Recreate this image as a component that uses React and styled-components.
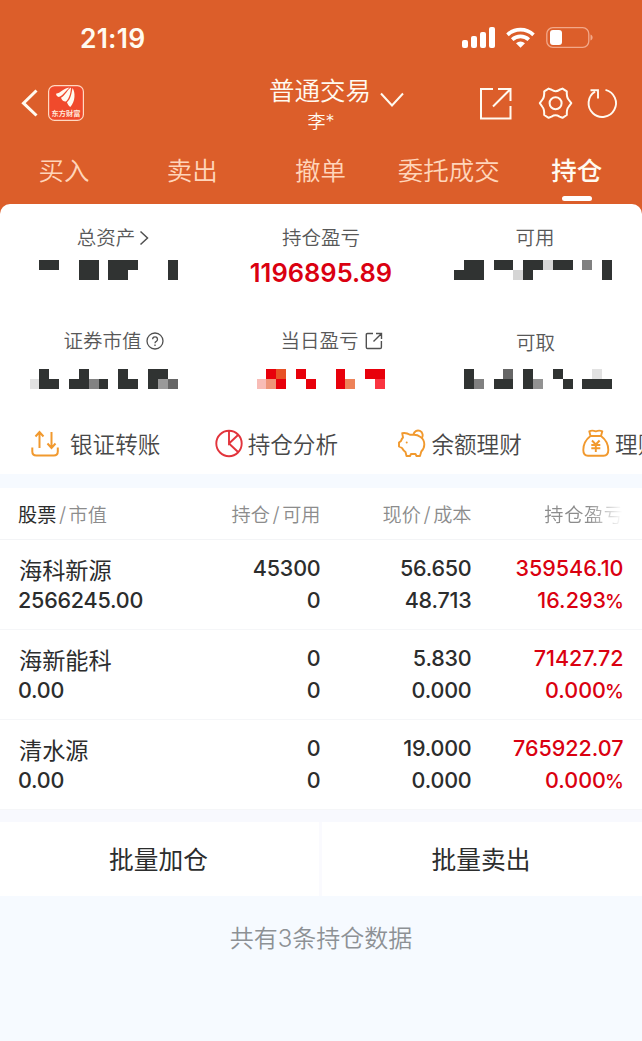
import React from 'react'
import styled, { createGlobalStyle } from 'styled-components'

const GlobalStyle = createGlobalStyle`
  * {
    box-sizing: border-box;
  }

  body {
    margin: 0;
    background: #f6faff;
    font-family: Inter, 'Noto Sans CJK SC', sans-serif;
    color: #2c2d2d;
    overflow: hidden;
  }
`

const Page = styled('div')`
  width: 642px;
  height: 1041px;
  overflow: hidden;
  white-space: nowrap;
`

const Header = styled('header')`
  height: 214px;
  background: #dc5e2a;
  color: #fffaf0;
`

const StatusBar = styled('div')`
  display: flex;
  align-items: center;
  justify-content: space-between;
  height: 76px;
  padding: 0 49px 0 80px;
`

const Clock = styled('span')`
  font-size: 26.5px;
  font-weight: 600;
  line-height: 30px;
  letter-spacing: 0.2px;
`

const NavBar = styled('div')`
  display: grid;
  grid-template-columns: 214px 1fr 214px;
  height: 66px;
`

const NavSide = styled('div')`
  display: flex;
  align-items: center;
  padding-left: ${({ $right }) => ($right ? 50 : 20)}px;
  height: 54px;
`

const NavCenter = styled('div')`
  display: flex;
  flex-direction: column;
  align-items: center;
`

const Title = styled('div')`
  display: flex;
  align-items: center;
  gap: 9px;
  height: 30px;
  padding-left: 31px;
  font-size: 25.5px;
  line-height: 24px;
  font-weight: 350;
`

const Chevron = styled('svg')`
  margin-top: 17px;
`

const Account = styled('div')`
  font-size: 18px;
  line-height: 32px;
  font-weight: 350;
`

const Tabs = styled('nav')`
  display: flex;
  height: 62px;
  padding: 12px 1px 0 0;
`

const Tab = styled('div')`
  display: flex;
  flex-direction: column;
  align-items: center;
  width: 128.2px;
  font-size: 25.5px;
  line-height: 34px;
  font-weight: ${({ $active }) => ($active ? 500 : 350)};
  color: ${({ $active }) => ($active ? '#fffaf0' : '#ffd5ba')};

  &::after {
    content: '';
    width: 30px;
    height: 5px;
    margin-top: 8px;
    border-radius: 3px;
    background: ${({ $active }) => ($active ? '#fff' : 'transparent')};
  }
`

const Summary = styled('section')`
  height: 270px;
  margin-top: -10px;
  border-radius: 10px 10px 0 0;
  background: #fff;
`

const Stats = styled('div')`
  display: grid;
  grid-template-columns: repeat(3, 214px);
  grid-template-rows: 109px 97px;
  padding-top: 19px;
`

const Stat = styled('div')`
  display: flex;
  flex-direction: column;
`

const StatLabel = styled('div')`
  display: flex;
  align-items: center;
  justify-content: center;
  gap: ${({ $gap }) => $gap || 4}px;
  height: 30px;
  margin-top: ${({ $drop }) => $drop || 0}px;
  padding-left: ${({ $indent }) => $indent || 0}px;
  font-size: 19.5px;
  font-weight: 350;
  color: #585858;
`

const LabelText = styled('span')`
  padding-bottom: 3px;
`

const Profit = styled('div')`
  text-align: center;
  font-size: 25.5px;
  line-height: 40px;
  font-weight: 600;
  color: #da0010;
`

const Mosaic = styled('svg')`
  display: block;
  margin-top: ${({ $top }) => $top}px;
`

const Shortcuts = styled('div')`
  display: flex;
  height: 44px;
  margin-top: -7px;
  padding-left: 30px;
  overflow: hidden;
`

const Shortcut = styled('div')`
  display: flex;
  align-items: center;
  flex: none;
  gap: ${({ $gap }) => $gap || 4}px;
  width: 183.7px;
  font-size: 22.6px;
  font-weight: 350;
  color: #484848;

  span {
    padding-bottom: 2px;
  }
`

const Holdings = styled('section')`
  margin-top: 14px;
  background: #fff;
`

const HeadRow = styled('div')`
  display: grid;
  grid-template-columns: 170px 132.5px 151px 152px;
  align-items: center;
  height: 52px;
  padding-left: 18px;
  border-bottom: 1px solid #f3f4f6;
  font-size: 19.2px;
  font-weight: 350;
  color: #8c8c8c;

  b {
    font-weight: 400;
    color: #2c2d2d;
  }
`

const HeadCell = styled('div')`
  text-align: ${({ $left }) => ($left ? 'left' : 'right')};
`

const FadedCell = styled(HeadCell)`
  letter-spacing: 0.6px;
  mask-image: linear-gradient(to right, #000 76%, transparent 99%);
`

const Slash = styled('span')`
  margin: 0 2.5px;
  font-size: 20.5px;
`

const Row = styled('div')`
  display: grid;
  grid-template-columns: 170px 132.5px 151px 152px;
  height: 90px;
  padding: 12px 0 0 18px;
  border-bottom: 1px solid #f5f6f8;
`

const Cell = styled('div')`
  display: flex;
  flex-direction: column;
  align-items: ${({ $left }) => ($left ? 'flex-start' : 'flex-end')};
  font-size: 21.5px;
  line-height: 32px;
  font-weight: 500;
  letter-spacing: ${({ $red }) => ($red ? 0 : -0.2)}px;
  color: ${({ $red }) => ($red ? '#da0010' : '#2c2d2d')};
`

const StockName = styled('span')`
  height: 32px;
  padding: 3px 0 0 1px;
  font-size: 23.2px;
  font-weight: 400;
  letter-spacing: 0;
`

const Percent = styled('span')`
  margin-left: -1px;
  font-size: 19px;
  letter-spacing: -0.3px;
`

const Actions = styled('div')`
  display: grid;
  grid-template-columns: 319px 320px;
  gap: 3px;
  border-top: 12px solid #f8f9fe;
  background: #fafafe;
`

const Action = styled('div')`
  height: 74px;
  padding-right: 2px;
  background: #fff;
  text-align: center;
  font-size: 24.7px;
  line-height: 77px;
  font-weight: 400;
`

const Footer = styled('footer')`
  text-align: center;
  font-size: 24px;
  line-height: 86px;
  font-weight: 350;
  color: #8d9195;
`

const DARK = '#303332'
const RED = '#e8000b'

// [x, y, width, height, colour], relative to the column
const masks = {
  total: [
    [39, 0, 20, 10], [79, 0, 20, 20], [108, 0, 30, 10], [108, 10, 20, 10], [168, 0, 10, 20],
  ],
  available: [
    [36, 0, 20, 10], [26, 10, 30, 10], [66, 0, 19, 10], [85, 10, 10, 10, '#d5d5d5'],
    [95, 0, 20, 10], [95, 10, 10, 10], [115, 0, 10, 10, '#d8d8d8'], [125, 0, 20, 10],
    [154, 0, 10, 10, '#808080'], [174, 0, 10, 20],
  ],
  market: [
    [30, 10, 9, 10, '#e2e2e2'], [39, 0, 10, 20], [49, 10, 10, 10], [79, 0, 10, 20],
    [69, 10, 10, 10], [89, 10, 10, 10, '#828282'], [99, 10, 9, 10], [118, 0, 10, 20],
    [128, 10, 10, 10], [148, 0, 20, 10], [148, 10, 10, 10], [158, 10, 10, 10, '#999'],
    [168, 10, 10, 10, '#666'],
  ],
  today: [
    [52, 0, 10, 10, RED], [62, 0, 10, 10, '#e85126'], [43, 10, 9, 10, '#f8bcb6'],
    [52, 10, 10, 10, '#ee9478'], [62, 10, 10, 10, RED], [82, 0, 10, 10, RED],
    [92, 10, 10, 10, RED], [122, 0, 9, 20, RED], [131, 10, 10, 10, '#ee8259'],
    [151, 0, 20, 10, RED], [161, 10, 10, 10, '#fa3440'],
  ],
  withdrawable: [
    [36, 0, 10, 20], [46, 10, 10, 10, '#808080'], [75, 0, 10, 10, '#666'], [66, 10, 19, 10],
    [95, 0, 10, 20], [105, 10, 10, 10, '#929292'], [125, 0, 10, 10], [135, 10, 10, 10],
    [164, 0, 10, 10, '#e2e2e2'], [154, 10, 30, 10],
  ],
}

const MaskedValue = ({ cells, top }) => (
  <Mosaic $top={top} width="214" height="20" shapeRendering="crispEdges">
    {cells.map(([x, y, w, h, fill = DARK]) => (
      <rect key={`${x}-${y}`} x={x} y={y} width={w} height={h} fill={fill} />
    ))}
  </Mosaic>
)

const StatusIcons = () => (
  <svg width="132" height="24" viewBox="461 26 132 24" fill="#fff">
    <rect x="462" y="40" width="6" height="8" rx="2" />
    <rect x="471" y="36" width="6" height="12" rx="2" />
    <rect x="480" y="32" width="6" height="16" rx="2" />
    <rect x="489" y="27" width="6" height="21" rx="2" />
    <g fill="none" stroke="#fff" strokeWidth="3.7">
      <path d="M507.500 34.800a19 19 0 0 1 26 0" />
      <path d="M512.200 39.600a12.300 12.300 0 0 1 16.600 0" />
    </g>
    <path d="M516 43.200a7 7 0 0 1 9 0L520.500 47.800z" />
    <rect x="546.800" y="27.700" width="42" height="19.600" rx="6" fill="none" stroke="#f2a889" strokeWidth="1.300" />
    <rect x="550" y="30" width="12" height="15" rx="3" />
    <path d="M590.500 34.500c2.800 1.200 2.800 4.800 0 6z" fill="#f2a889" />
  </svg>
)

const BackAndLogo = () => (
  <svg width="66" height="40" viewBox="20 83 66 40">
    <path d="M36.500 90.500L23.500 103.200L36.500 115.500" fill="none" stroke="#fffaf0" strokeWidth="3" />
    <rect x="48.600" y="85.600" width="34.800" height="34.800" rx="6" fill="#f04a2c" stroke="#ffd9c2" strokeWidth="1.200" />
    <g fill="#fffaf0">
      <path d="M56 93.800C60.500 93.300 63 88.500 69.500 87.600C66 90.500 63.500 95 59.500 96.800C57.500 97.300 56.400 95.800 56 93.800z" />
      <path d="M61 97.800C65.500 95.500 67 90 71 87.600C70.800 91 70 98 66 101.500C63.500 101.800 61.800 100 61 97.800z" />
      <path d="M67 102.300C71 98.500 71.500 93 72.500 88C75.500 92 75.500 101.500 70.300 107C68.500 106 67.500 104 67 102.300z" />
    </g>
    <text
      x="66"
      y="116"
      textAnchor="middle"
      fontSize="7.200"
      fontWeight="700"
      fill="#ffe9da"
      fontFamily="'Noto Sans CJK SC', sans-serif"
    >
      东方财富
    </text>
  </svg>
)

const NavIcons = () => (
  <svg width="142" height="40" viewBox="478 83 142 40" fill="none" stroke="#fffaf0" strokeWidth="2">
    <path d="M493 89H481v29.500h29.500V106M498 89h12.500v12M510 89.500L493 106.500" />
    <path
      d="M548.600 88.600L551.600 89.800Q555.500 92.500 559.500 89.800L562.500 88.600L566.800 91.300Q566.500 97 568.500 99.500L571.300 103.200L568.500 107Q566.500 109.500 566.800 115L562.500 117.800L559.500 116.600Q555.500 114 551.600 116.600L548.600 117.800L544.200 115Q544.500 109.500 542.500 107L539.800 103.200L542.500 99.500Q544.500 97 544.200 91.300z"
      strokeLinejoin="round"
    />
    <circle cx="555.600" cy="103.300" r="6" />
    <path d="M605.500 89.900A13.700 13.700 0 1 1 595 91.600" strokeWidth="1.900" />
    <path d="M590.500 90.200H598V98.500" strokeWidth="1.900" />
  </svg>
)

const HelpIcon = () => (
  <svg width="18" height="18" fill="none" stroke="#505050" strokeWidth="1.300">
    <circle cx="9" cy="9" r="8" />
    <path d="M6.600 7.300a2.450 2.450 0 1 1 3.700 2.100c-.9.500-1.300.9-1.300 1.800M9 12.500v1.500" />
  </svg>
)

const OpenIcon = () => (
  <svg width="18" height="18" fill="none" stroke="#505050" strokeWidth="1.400">
    <path d="M8 1.500H2.500Q1.300 1.500 1.300 2.700v12.600q0 1.200 1.200 1.200h12.600q1.300 0 1.300-1.200V9M11 1.500h5.500V7M16.300 1.700L8.500 9.500" />
  </svg>
)

const TransferIcon = () => (
  <svg width="30" height="30" fill="none" stroke="#f1992e" strokeWidth="2">
    <path d="M9.500 19V3.500M5.500 7.500l4-4.500l4 4.500M21.500 3v15.500M17.500 14.500l4 4.500l4-4.500" />
    <path d="M2.300 18.500v4q0 4 4 4h17.500q4 0 4-4v-4" />
  </svg>
)

const PieIcon = () => (
  <svg width="30" height="30" fill="none" stroke="#e2343c" strokeWidth="1.900">
    <circle cx="15" cy="14.500" r="12.700" />
    <path d="M15 1.800v12.700L24.300 5.800M15 14.500l9.300 8.700" />
  </svg>
)

const PiggyIcon = () => (
  <svg width="30" height="30" fill="none" stroke="#f1992e" strokeWidth="1.900" strokeLinejoin="round">
    <path d="M17 5.800H13Q9.500 3.500 5.200 4.200L6 8.500Q4.500 10 4 12L2 13.500V17.500L5 19Q6.300 21.500 8.500 23L9.500 27H13L14 25H18.500L19.500 27H23L24.300 22.500Q27.300 19.500 27.300 15.500Q27.300 10.500 23.500 8Q20.500 5.800 17 5.800Z" />
    <path d="M16.500 5.600a4.600 4.600 0 1 1 8 3.600" />
    <circle cx="9.700" cy="13.500" r="1" fill="#f1992e" stroke="none" />
  </svg>
)

const MoneyBagIcon = () => (
  <svg width="30" height="30" fill="none" stroke="#f1992e" strokeWidth="1.900" strokeLinejoin="round">
    <path d="M9.500 7L8.300 2.300Q11 1 14.800 2.300Q18.500 1 21.300 2.300L20 7zM9.500 7Q2.300 12.500 2.300 21Q2.300 26.700 7 26.700H22.500Q27.300 26.700 27.300 21Q27.300 12.500 20 7" />
    <path d="M11 11.500l3.800 4l3.800-4M10.300 16h9M10.300 19.300h9M14.800 15.500v7.500" />
  </svg>
)

const tabs = ['买入', '卖出', '撤单', '委托成交', '持仓']

const stocks = [
  { name: '海科新源', value: '2566245.00', held: '45300', price: '56.650', cost: '48.713', profit: '359546.10', rate: '16.293' },
  { name: '海新能科', value: '0.00', held: '0', price: '5.830', cost: '0.000', profit: '71427.72', rate: '0.000' },
  { name: '清水源', value: '0.00', held: '0', price: '19.000', cost: '0.000', profit: '765922.07', rate: '0.000' },
]

const StockRow = ({ stock }) => (
  <Row>
    <Cell $left>
      <StockName>{stock.name}</StockName>
      <span>{stock.value}</span>
    </Cell>
    <Cell>
      <span>{stock.held}</span>
      <span>0</span>
    </Cell>
    <Cell>
      <span>{stock.price}</span>
      <span>{stock.cost}</span>
    </Cell>
    <Cell $red>
      <span>{stock.profit}</span>
      <span>
        {stock.rate}
        <Percent>%</Percent>
      </span>
    </Cell>
  </Row>
)

export default () => (
  <Page>
    <GlobalStyle />
    <Header>
      <StatusBar>
        <Clock>21:19</Clock>
        <StatusIcons />
      </StatusBar>
      <NavBar>
        <NavSide>
          <BackAndLogo />
        </NavSide>
        <NavCenter>
          <Title>
            <span>普通交易</span>
            <Chevron width="24" height="16" fill="none" stroke="#fffaf0" strokeWidth="2">
              <path d="M1 1.500L12 13.500L23 1.500" />
            </Chevron>
          </Title>
          <Account>李*</Account>
        </NavCenter>
        <NavSide $right>
          <NavIcons />
        </NavSide>
      </NavBar>
      <Tabs>
        {tabs.map((tab) => <Tab key={tab} $active={tab === '持仓'}>{tab}</Tab>)}
      </Tabs>
    </Header>
    <Summary>
      <Stats>
        <Stat>
          <StatLabel $indent={12}>
            <LabelText>总资产</LabelText>
            <svg width="10" height="16" fill="none" stroke="#505050" strokeWidth="1.500">
              <path d="M1.500 1.500L8.500 8L1.500 14.500" />
            </svg>
          </StatLabel>
          <MaskedValue cells={masks.total} top={7} />
        </Stat>
        <Stat>
          <StatLabel>
            <LabelText>持仓盈亏</LabelText>
          </StatLabel>
          <Profit>1196895.89</Profit>
        </Stat>
        <Stat>
          <StatLabel>
            <LabelText>可用</LabelText>
          </StatLabel>
          <MaskedValue cells={masks.available} top={7} />
        </Stat>
        <Stat>
          <StatLabel $indent={13} $drop={-6}>
            <LabelText>证券市值</LabelText>
            <HelpIcon />
          </StatLabel>
          <MaskedValue cells={masks.market} top={13} />
        </Stat>
        <Stat>
          <StatLabel $indent={21} $gap={6} $drop={-6}>
            <LabelText>当日盈亏</LabelText>
            <OpenIcon />
          </StatLabel>
          <MaskedValue cells={masks.today} top={13} />
        </Stat>
        <Stat>
          <StatLabel $indent={1} $drop={-4}>
            <LabelText>可取</LabelText>
          </StatLabel>
          <MaskedValue cells={masks.withdrawable} top={11} />
        </Stat>
      </Stats>
      <Shortcuts>
        <Shortcut $gap={10}>
          <TransferIcon />
          <span>银证转账</span>
        </Shortcut>
        <Shortcut>
          <PieIcon />
          <span>持仓分析</span>
        </Shortcut>
        <Shortcut>
          <PiggyIcon />
          <span>余额理财</span>
        </Shortcut>
        <Shortcut>
          <MoneyBagIcon />
          <span>理财</span>
        </Shortcut>
      </Shortcuts>
    </Summary>
    <Holdings>
      <HeadRow>
        <HeadCell $left>
          <b>股票</b>
          <Slash>/</Slash>
          市值
        </HeadCell>
        <HeadCell>
          持仓
          <Slash>/</Slash>
          可用
        </HeadCell>
        <HeadCell>
          现价
          <Slash>/</Slash>
          成本
        </HeadCell>
        <FadedCell>持仓盈亏</FadedCell>
      </HeadRow>
      {stocks.map((stock) => <StockRow key={stock.name} stock={stock} />)}
    </Holdings>
    <Actions>
      <Action>批量加仓</Action>
      <Action>批量卖出</Action>
    </Actions>
    <Footer>共有3条持仓数据</Footer>
  </Page>
)
